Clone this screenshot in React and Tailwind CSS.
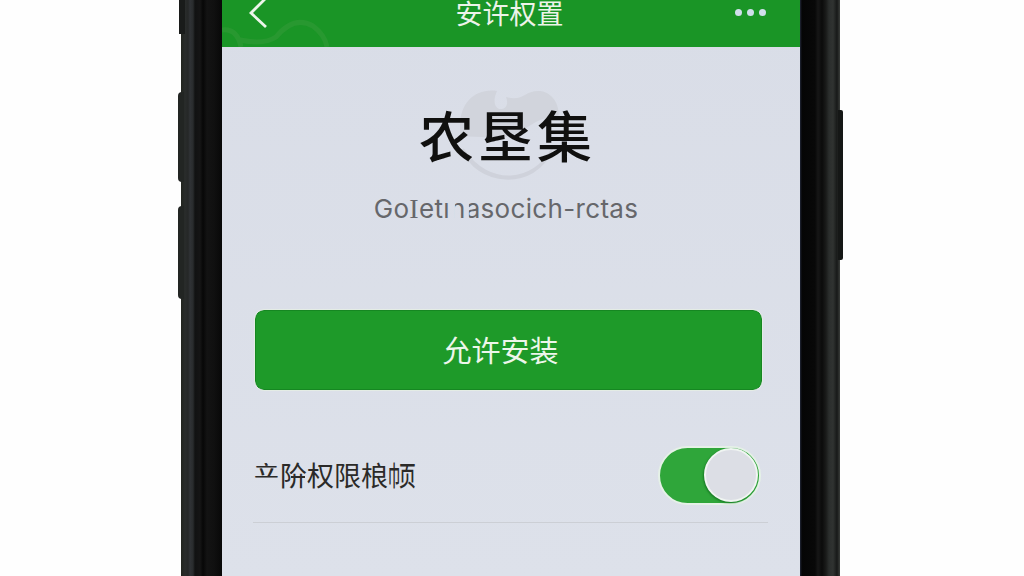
import React from 'react'
import { useState } from 'react';

const dots = [0, 1, 2];

function Header() {
  return (
    <header className='relative h-[47px] shrink-0 bg-[#1a9526] flex justify-between overflow-hidden'>
        <svg className='absolute left-0 top-0' width='120' height='47' fill='none' stroke='#53a44f' strokeOpacity='.25' strokeWidth='5'>
            <path d='M0 30 Q15 28 19 47 M18 40 Q42 45 54 37 Q72 15 91 26 Q103 35 105 47' />
        </svg>
        <svg className='relative ml-[26px] mt-[-4px]' width='24' height='34' fill='none' stroke='#edf5eb' strokeWidth='2.8'>
            <path d='M18 2 L3 17 L18 31' />
        </svg>
        <h1 className='ml-[12px] mt-[-1px] text-[27px] leading-[27px] text-[#edf3e9] whitespace-nowrap'>安许权置</h1>
        <div className='flex gap-[5px] mt-[9px] mr-[34px]'>
            {dots.map((dot) => (
                <span key={dot} className='size-[7px] rounded-full bg-[#d0dfeb]'></span>
            ))}
        </div>
    </header>
  )
}

export default function App() {
    const [allowed, setAllowed] = useState(true);

  return (
    <main className='relative w-[1024px] h-[576px] overflow-hidden bg-[#fefefe] flex font-["Noto_Sans_CJK_SC",sans-serif]'>
        {/* side buttons */}
        <div className='absolute left-[179px] top-0 w-[6px] h-[34px] bg-[#191b1a]'></div>
        <div className='absolute left-[178px] top-[92px] w-[6px] h-[90px] rounded-l-sm bg-[#222523]'></div>
        <div className='absolute left-[178px] top-[206px] w-[6px] h-[93px] rounded-l-sm bg-[#222523]'></div>
        <div className='absolute left-[838px] top-[110px] w-[5px] h-[150px] rounded-r-xs bg-[#151716]'></div>
        <div className='ml-[181px] w-[41px] shrink-0 bg-[linear-gradient(to_right,#22251f_0px,#292c2b_4px,#252727_7px,#303336_9px,#292c2d_12px,#111212_14px,#151515_19px,#070707_22px,#131313_26px,#101010_33px,#080808_41px)]'></div>
        <div className='w-[578px] shrink-0 flex flex-col bg-linear-to-b from-[#d9dde7] to-[#dde1ea]'>
            <Header />
            <section className='relative h-[263px] shrink-0 flex flex-col items-center'>
                <svg className='absolute left-[236px] top-[41px]' width='108' height='96'>
                    <path d='M2 38 C2 14 18 0 39 3 C35 12 36 19 41 21 C48 22 51 16 48 9 C66 14 66 2 82 3 C94 4 103 17 100 31 C84 24 69 42 55 47 C38 53 20 47 2 49 Z' fill='#d1d4dc' />
                    <path d='M5 61 C17 97 77 104 94 61 C77 94 31 101 5 61 Z' fill='#cfd2db' stroke='#cfd2db' strokeWidth='2' />
                </svg>
                <h2 className='relative mt-[46px] -ml-[7px] text-[55px] leading-[80px] tracking-[4px] font-medium text-[#10100f] whitespace-nowrap'>农垦集</h2>
                <p className='relative mt-[21px] -ml-[10px] font-["Inter",sans-serif] text-[26px] leading-[30px] tracking-[0.33px] text-[#66676b] whitespace-nowrap'>
                    Go<span className='font-["Liberation_Serif",serif] text-[28px]'>I</span>etı<span className='inline-block [clip-path:inset(0_0_0_32%)]'>n</span><span className='inline-block [clip-path:inset(0_0_0_22%)]'>a</span>socich-rctas
                </p>
            </section>
            <button type='button' className='ml-[33px] w-[507px] h-[80px] shrink-0 rounded-[9px] bg-[#1e9a29] border border-[#168722] text-[#edf6eb] text-[29px] leading-[36px] pr-[16px] pb-[3px] outline outline-[#e4ece5]'>允许安装</button>
            <div className='ml-[31px] w-[515px] h-[133px] shrink-0 flex items-center justify-between border-b border-[#cccfd5] pt-[38px] pr-[7px]'>
                <span className='flex text-[27px] leading-[40px] text-[#2b2a28] whitespace-nowrap'>
                    <span className='inline-block font-medium scale-x-[.92] scale-y-[.56] -translate-y-[5px]'>立</span>
                    <span className='relative'>阶<span className='absolute left-[11px] top-[21px] w-[14px] h-[2px] bg-[#2b2a28]'></span></span>
                    权限桹
                    {/* narrow left part and page part share one cell */}
                    <span className='w-[11px] origin-left scale-x-[.45] font-medium'>巾</span>
                    <span className='w-[16px] origin-left scale-x-[.62] font-medium'>页</span>
                </span>
                <button type='button' aria-label='允许安装' onClick={() => setAllowed(!allowed)} className={`w-[103px] h-[59px] rounded-full border-2 border-[#e5f1e7] flex items-center ${allowed ? 'justify-end bg-[#2fa63a]' : 'bg-gray-400'}`}>
                    <span className='mr-px size-[54px] rounded-full bg-[#dcdee5] border-2 border-[#f0f5f2] shadow-[-1px_1px_2px_#187b25]'></span>
                </button>
            </div>
        </div>
        <div className='w-[40px] shrink-0 bg-[linear-gradient(to_right,#222738_0px,#050505_2px,#080808_15px,#161616_18px,#0b0b0b_22px,#1a1b1a_26px,#2b2e2d_29px,#303331_33px,#171918_37px,#3a3d3a_40px)]'></div>
    </main>
  )
}
